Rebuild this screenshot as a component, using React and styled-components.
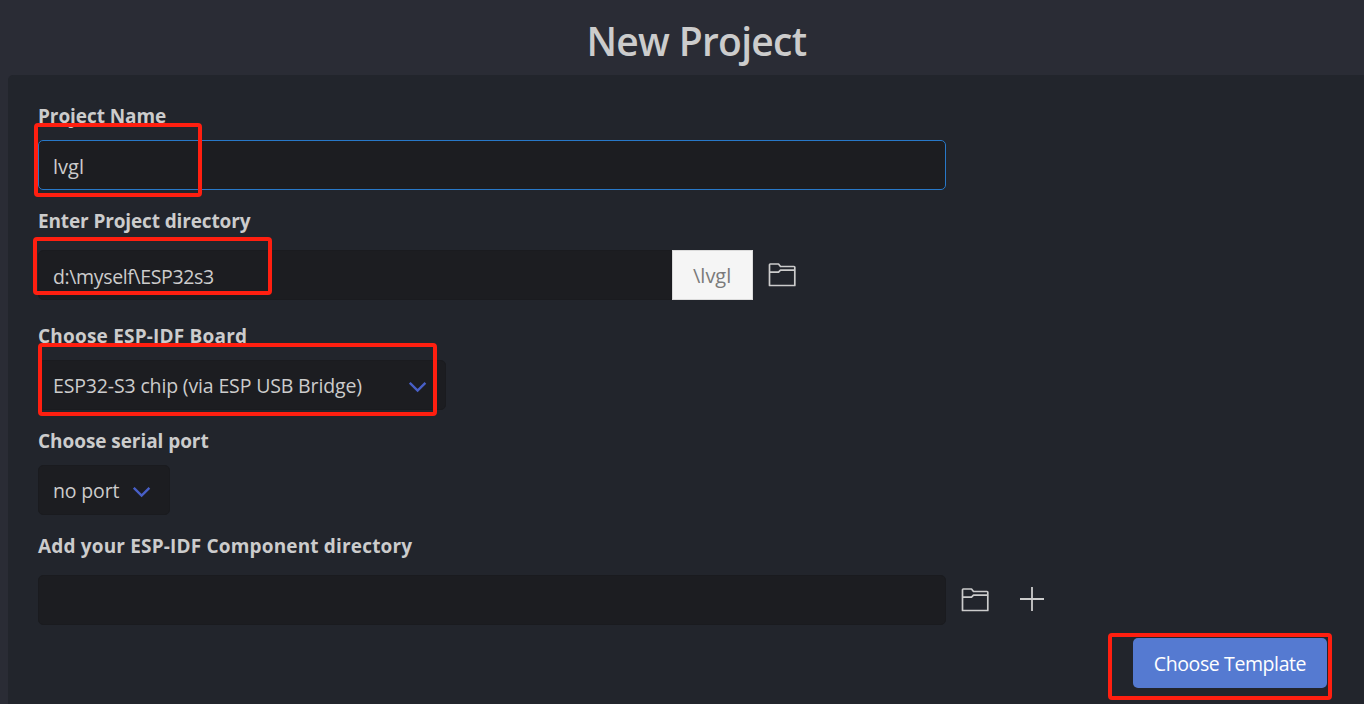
import React from "react";
import styled, { createGlobalStyle } from "styled-components";

const GlobalStyle = createGlobalStyle`
  * { box-sizing: border-box; }
  body {
    margin: 0;
    background: #2a2c35;
    color: #cccccc;
    font-family: "Open Sans", "Noto Sans", sans-serif;
    font-size: 19px;
    overflow: hidden;
  }
`;

const Page = styled.main`
  position: relative;
  height: 704px;
  padding-left: 8px;
  display: flex;
  flex-direction: column;
  overflow: hidden;
`;

const Title = styled.h1`
  margin: 0;
  height: 75px;
  padding: 11px 0 0 21px;
  line-height: 60px;
  font-size: 39px;
  font-weight: 600;
  text-align: center;
  letter-spacing: ${(p) => p.$spacing}px;
`;

const Panel = styled.section`
  flex: 1;
  padding: 26px 36px 0 30px;
  background: #22252c;
  border-top-left-radius: 5px;
`;

const Field = styled.div`
  display: flex;
  flex-direction: column;
  gap: ${(p) => p.$gap || 9}px;
  margin-bottom: ${(p) => p.$after || 16}px;
`;

const Label = styled.label`
  height: 30px;
  line-height: 30px;
  font-weight: 700;
  white-space: nowrap;
  letter-spacing: ${(p) => p.$spacing}px;
`;

const Row = styled.div`
  display: flex;
  align-items: center;
`;

const Input = styled.div`
  width: ${(p) => p.$width}px;
  height: 50px;
  padding: ${(p) => p.$drop || 0}px 14px 0;
  font-size: ${(p) => p.$size || 19.5}px;
  line-height: 50px;
  background: #1c1d21;
  border: 1px solid ${(p) => (p.$focused ? "#2878c8" : "#1a1b1f")};
  border-radius: ${(p) => (p.$joined ? "5px 0 0 5px" : "5px")};
  white-space: nowrap;
  letter-spacing: ${(p) => p.$spacing || 0}px;
`;

const Suffix = styled.span`
  width: 81px;
  height: 50px;
  padding-left: 20px;
  font-size: 20px;
  line-height: 50px;
  color: #7a7a7a;
  background: #f5f5f5;
  border: 1px solid #dbdbdb;
`;

const Select = styled.div`
  display: flex;
  align-items: center;
  justify-content: space-between;
  width: ${(p) => p.$width}px;
  height: 50px;
  padding: 0 18px 0 14px;
  font-size: 19.5px;
  background: #1c1d21;
  border: 1px solid #1a1b1f;
  border-radius: 5px;
  white-space: nowrap;
  letter-spacing: ${(p) => p.$spacing}px;

  svg {
    margin-top: 3px;
  }
`;

const IconSlot = styled.span`
  display: flex;
  margin-left: ${(p) => p.$before}px;
  padding-bottom: ${(p) => p.$lift || 0}px;
`;

const Actions = styled.div`
  display: flex;
  justify-content: flex-end;
  margin-top: -3px;
  padding-right: 1px;
`;

const Button = styled.button`
  width: 194px;
  height: 50px;
  padding: 2px 0 0;
  border: 0;
  border-radius: 5px;
  background: #557ad1;
  color: #ffffff;
  font: inherit;
  font-size: 19.5px;
  line-height: 48px;
  white-space: nowrap;
  letter-spacing: ${(p) => p.$spacing}px;
`;

const Highlight = styled.div`
  position: absolute;
  left: ${(p) => p.$x}px;
  top: ${(p) => p.$y}px;
  width: ${(p) => p.$w}px;
  height: ${(p) => p.$h}px;
  border: 4px solid #ff1f10;
  border-radius: 4px;
  pointer-events: none;
`;

const Folder = () => (
  <svg width="28" height="24" viewBox="0 0 28 24" fill="none" stroke="#cccccc" strokeWidth="1.7" strokeLinejoin="round">
    <path d="M1.5 22.5V1.8Q1.5 1 2.3 1H10.5L12.5 3.5H26Q26.8 3.5 26.8 4.3V22.5Z" />
    <path d="M1.5 9.2H10.5L12.5 7.2H26.8" />
  </svg>
);

const Plus = () => (
  <svg width="26" height="26" viewBox="0 0 26 26" stroke="#cccccc" strokeWidth="1.8">
    <path d="M13 1V25M1 13H25" />
  </svg>
);

const Chevron = () => (
  <svg width="18" height="12" viewBox="0 0 18 12" fill="none" stroke="#485fc7" strokeWidth="2.4">
    <path d="M0.8 1.8L8.6 9.6L16.4 1.8" />
  </svg>
);

export default function App() {
  return (
    <Page>
      <GlobalStyle />
      <Title $spacing={-0.7}>New Project</Title>
      <Panel>
        <Field>
          <Label $spacing={-0.08}>Project Name</Label>
          <Input $width={908} $size={20} $focused $drop={1}>lvgl</Input>
        </Field>
        <Field $gap={14} $after={21}>
          <Label $spacing={-0.13}>Enter Project directory</Label>
          <Row>
            <Input $width={634} $joined $drop={1} $spacing={-0.36}>d:\myself\ESP32s3</Input>
            <Suffix>\lvgl</Suffix>
            <IconSlot $before={15}><Folder /></IconSlot>
          </Row>
        </Field>
        <Field>
          <Label $spacing={0.2}>Choose ESP-IDF Board</Label>
          <Select $width={408} $spacing={-0.15}>
            <span>ESP32-S3 chip (via ESP USB Bridge)</span>
            <Chevron />
          </Select>
        </Field>
        <Field>
          <Label $spacing={-0.06}>Choose serial port</Label>
          <Select $width={132} $spacing={-0.15}>
            <span>no port</span>
            <Chevron />
          </Select>
        </Field>
        <Field $gap={14}>
          <Label $spacing={0.17}>Add your ESP-IDF Component directory</Label>
          <Row>
            <Input $width={908} />
            <IconSlot $before={15}><Folder /></IconSlot>
            <IconSlot $before={30} $lift={2}><Plus /></IconSlot>
          </Row>
        </Field>
        <Actions>
          <Button $spacing={-0.4}>Choose Template</Button>
        </Actions>
      </Panel>
      <Highlight $x={34} $y={123} $w={168} $h={74} />
      <Highlight $x={33} $y={237} $w={239} $h={58} />
      <Highlight $x={38} $y={343} $w={399} $h={73} />
      <Highlight $x={1108} $y={633} $w={224} $h={67} />
    </Page>
  );
}
